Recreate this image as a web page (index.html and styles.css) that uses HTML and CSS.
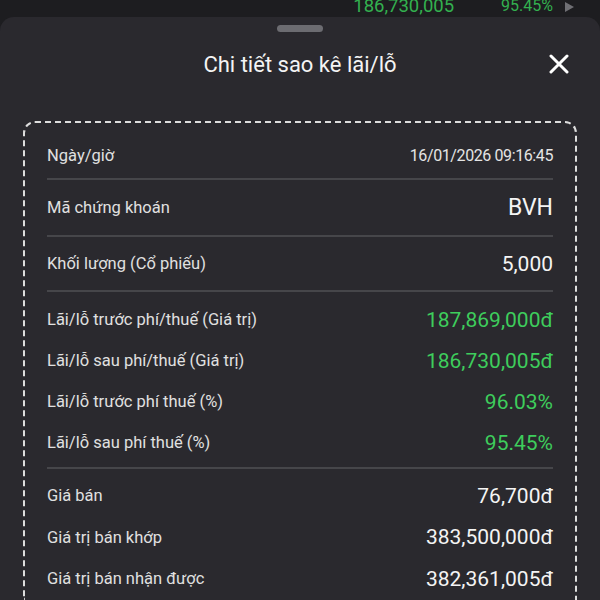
FILE: index.html
```html
<!DOCTYPE html>
<html lang="vi">
<head>
    <meta charset="UTF-8">
    <meta name="viewport" content="width=device-width, initial-scale=1.0">
    <title>Chi tiết sao kê lãi/lỗ</title>
    <link rel="stylesheet" href="styles.css">
</head>
<body>

    <div class="behind-row">
        <span class="behind-code">BVH</span>
        <span class="behind-value">186,730,005</span>
        <span class="behind-pct">95.45%</span>
        <span class="behind-arrow"></span>
    </div>

    <div class="sheet">
        <div class="sheet-handle"></div>

        <div class="sheet-header">
            <span class="sheet-title">Chi tiết sao kê lãi/lỗ</span>
            <button class="close-button" aria-label="Đóng">
                <svg width="20" height="20" viewBox="0 0 20 20"><path d="M2 2 L18 18 M18 2 L2 18" stroke="#fff" stroke-width="3" stroke-linecap="round"/></svg>
            </button>
        </div>

        <div class="detail-box">
            <div class="section section-info">
                <div class="row"><span class="label">Ngày/giờ</span><span class="value value-date">16/01/2026 09:16:45</span></div>
                <div class="row"><span class="label">Mã chứng khoán</span><span class="value value-code">BVH</span></div>
                <div class="row"><span class="label">Khối lượng (Cổ phiếu)</span><span class="value">5,000</span></div>
            </div>

            <div class="section section-pnl">
                <div class="row"><span class="label">Lãi/lỗ trước phí/thuế (Giá trị)</span><span class="value gain">187,869,000đ</span></div>
                <div class="row"><span class="label">Lãi/lỗ sau phí/thuế (Giá trị)</span><span class="value gain">186,730,005đ</span></div>
                <div class="row"><span class="label">Lãi/lỗ trước phí thuế (%)</span><span class="value gain">96.03%</span></div>
                <div class="row"><span class="label">Lãi/lỗ sau phí thuế (%)</span><span class="value gain">95.45%</span></div>
            </div>

            <div class="section section-sell">
                <div class="row"><span class="label">Giá bán</span><span class="value">76,700đ</span></div>
                <div class="row"><span class="label">Giá trị bán khớp</span><span class="value">383,500,000đ</span></div>
                <div class="row"><span class="label">Giá trị bán nhận được</span><span class="value">382,361,005đ</span></div>
            </div>
        </div>
    </div>

</body>
</html>
```

FILE: styles.css
```css
body { margin: 0; background: #1d1d20; color: #f2f2f2; font-family: Roboto, "Noto Sans", sans-serif; height: 600px; overflow: hidden; }

/* list row peeking out behind the sheet */
.behind-row { height: 17px; overflow: hidden; display: flex; align-items: flex-end; padding: 0 26px 0 22px; }
.behind-row span { line-height: 20px; margin-bottom: 1px; }
.behind-code { flex: 1; font-size: 18px; color: #d8d8d8; margin-bottom: 14px !important; }
.behind-value { font-size: 18.5px; color: #33b14f; }
.behind-pct { font-size: 16px; color: #33b14f; margin-left: 47px; }
.behind-arrow { width: 0; height: 0; border-top: 5px solid transparent; border-bottom: 5px solid transparent; border-left: 9px solid #6f6f74; margin: 0 0 5px 12px !important; }

.sheet { background: #2a292e; border-radius: 14px 14px 0 0; height: 583px; }
.sheet-handle { width: 46px; height: 7px; border-radius: 4px; background: #6c6c71; margin: 0 auto; position: relative; top: 8px; }
.sheet-header { display: flex; align-items: center; justify-content: center; height: 40px; margin-top: 20px; position: relative; }
.sheet-title { font-size: 22px; color: #f4f4f4; }
.close-button { position: absolute; right: 31px; top: 10px; background: none; border: none; padding: 0; width: 20px; height: 20px; cursor: pointer; }
.close-button svg { display: block; }

.detail-box { margin: 37px 23px 0; border: 2px dashed #dedede; border-bottom: none; border-radius: 12px 12px 0 0; padding: 0 22px; }

.row { display: flex; justify-content: space-between; align-items: center; }
.label { font-size: 16.5px; color: #e0e0e0; }
.value { font-size: 21px; color: #f4f4f4; }
.value-date { font-size: 16px; letter-spacing: -0.4px; color: #e4e4e4; }
.value-code { font-size: 23px; }
.gain { color: #3ecd5c; }

.section-info .row { box-sizing: border-box; height: 57px; border-bottom: 2px solid #46464a; }
.section-info .row:first-child { padding-top: 10px; }
.section-info .row:last-child { height: 55px; }
.section-pnl { padding: 7px 0 4px; border-bottom: 2px solid #46464a; }
.section-pnl .row { height: 41px; }
.section-sell { padding-top: 6px; }
.section-sell .row { height: 41.5px; }
```
